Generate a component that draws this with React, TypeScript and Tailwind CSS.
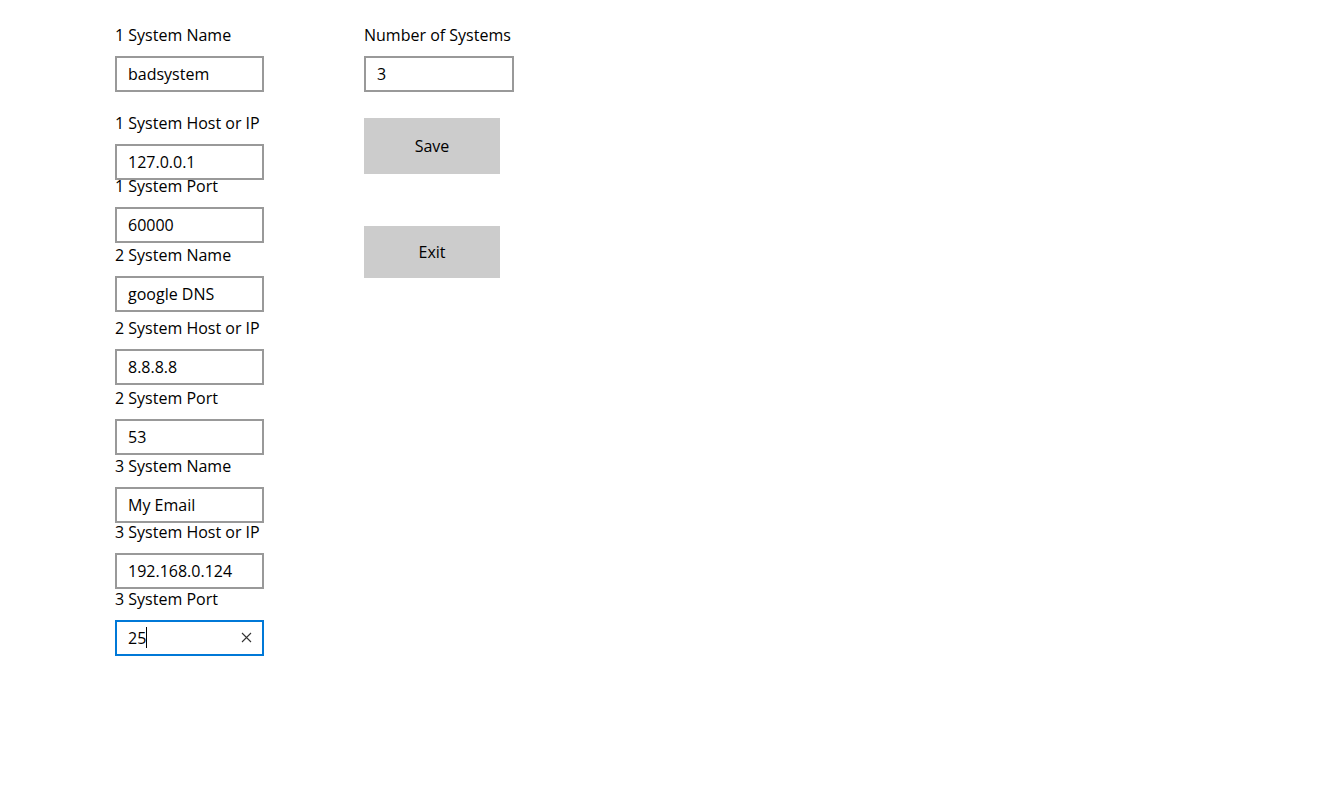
import React from 'react';

type Field = { label: string; value: string; mt: string; focused?: boolean };

const fields: Field[] = [
  { label: '1 System Name', value: 'badsystem', mt: 'mt-[25px]' },
  { label: '1 System Host or IP', value: '127.0.0.1', mt: 'mt-[21px]' },
  { label: '1 System Port', value: '60000', mt: 'mt-[-4px]' },
  { label: '2 System Name', value: 'google DNS', mt: 'mt-[2px]' },
  { label: '2 System Host or IP', value: '8.8.8.8', mt: 'mt-[6px]' },
  { label: '2 System Port', value: '53', mt: 'mt-[3px]' },
  { label: '3 System Name', value: 'My Email', mt: 'mt-[1px]' },
  { label: '3 System Host or IP', value: '192.168.0.124', mt: 'mt-[-1px]' },
  { label: '3 System Port', value: '25', mt: 'mt-0', focused: true },
];

function Box({ value, focused, width }: { value: string; focused?: boolean; width: string }) {
  return (
    <div
      className={`${width} h-9 border-2 bg-white flex items-center pl-[11px] pr-2 pb-px ${
        focused ? 'border-[#0078d7]' : 'border-[#999999]'
      }`}
    >
      <span className="text-[16px] leading-5 text-black">{value}</span>
      {focused && <span className="w-px h-[21px] bg-black" />}
      {focused && (
        <svg className="ml-auto mr-[2px]" width="11" height="11" viewBox="0 0 11 11">
          <path d="M1 1L10 10M10 1L1 10" stroke="#333" strokeWidth="1.1" />
        </svg>
      )}
    </div>
  );
}

function LabeledBox({ f }: { f: Field }) {
  return (
    <div className={f.mt}>
      <div className="h-5 leading-5 text-[16px] text-black whitespace-nowrap">{f.label}</div>
      <div className="mt-[11px]">
        <Box value={f.value} focused={f.focused} width="w-[149px]" />
      </div>
    </div>
  );
}

export default function App() {
  return (
    <div
      className="w-[1335px] h-[787px] bg-white flex pl-[115px] gap-[100px]"
      style={{ fontFamily: '"Open Sans", "Noto Sans", sans-serif' }}
    >
      <div className="flex flex-col w-[149px]">
        {fields.map(f => (
          <LabeledBox key={f.label} f={f} />
        ))}
      </div>
      <div className="flex flex-col">
        <div className="mt-[25px] h-5 leading-5 text-[16px] text-black whitespace-nowrap">Number of Systems</div>
        <div className="mt-[11px]">
          <Box value="3" width="w-[150px]" />
        </div>
        <button className="mt-[26px] w-[136px] h-14 bg-[#cccccc] text-[16px] text-black">Save</button>
        <button className="mt-[52px] w-[136px] h-[52px] bg-[#cccccc] text-[16px] text-black">Exit</button>
      </div>
    </div>
  );
}
